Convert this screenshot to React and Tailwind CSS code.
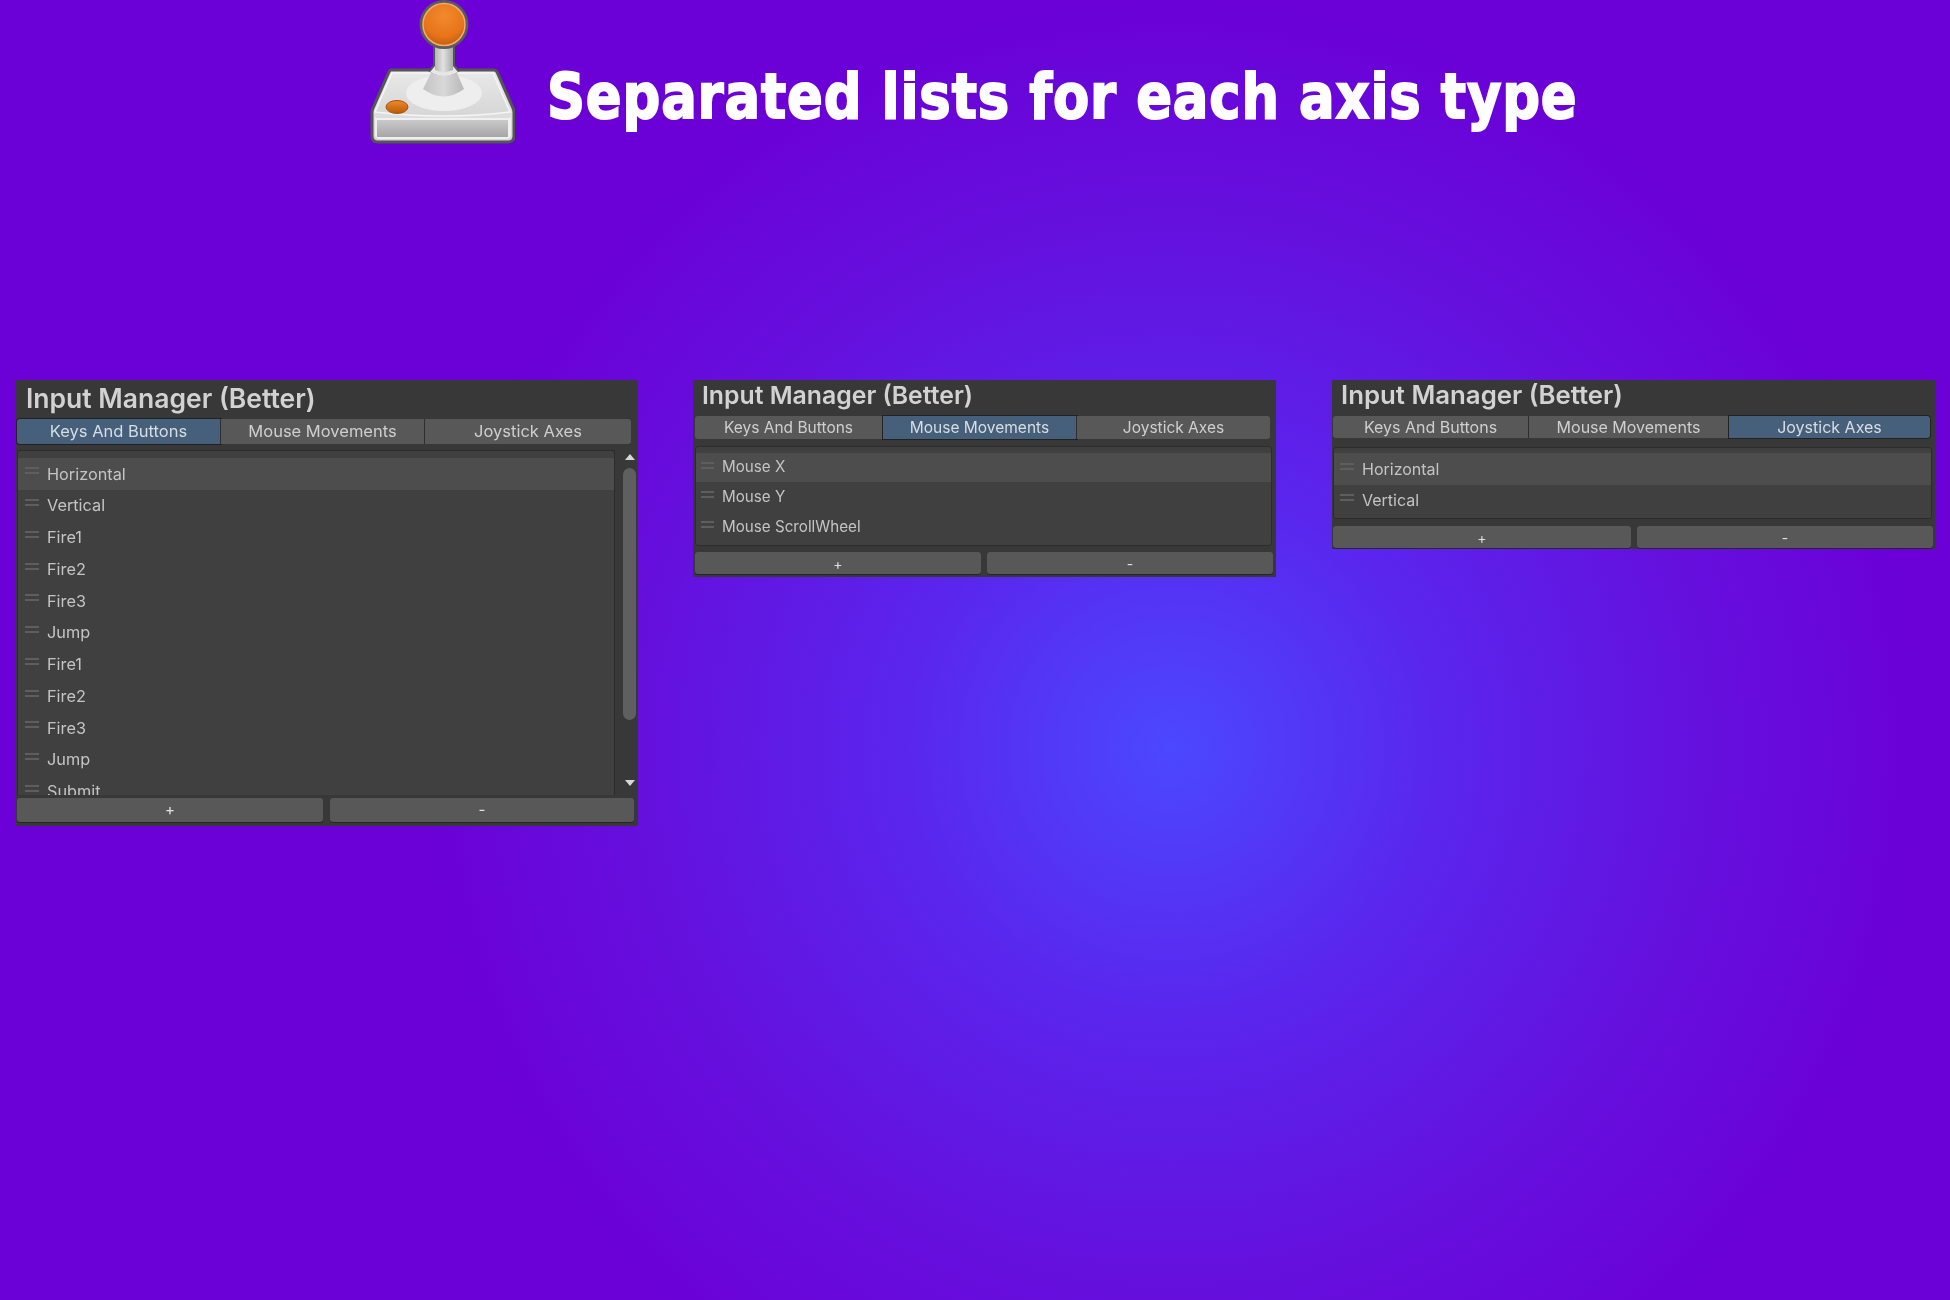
const keyRows = ["Horizontal", "Vertical", "Fire1", "Fire2", "Fire3", "Jump", "Fire1", "Fire2", "Fire3", "Jump", "Submit"];

const Joystick = () => (
  <svg width="145" height="145" viewBox="30 0 145 145" className="shrink-0">
    <defs>
      <linearGradient id="front" x1="0" y1="0" x2="0" y2="1">
        <stop offset="0" stopColor="#c9c9c9" />
        <stop offset="1" stopColor="#a6a6a6" />
      </linearGradient>
      <linearGradient id="top" x1="0" y1="0" x2="0" y2="1">
        <stop offset="0" stopColor="#e8e8e8" />
        <stop offset="1" stopColor="#d6d6d6" />
      </linearGradient>
      <linearGradient id="stem" x1="0" y1="0" x2="1" y2="0">
        <stop offset="0" stopColor="#b4b4b4" />
        <stop offset="0.45" stopColor="#e2e2e2" />
        <stop offset="1" stopColor="#a8a8a8" />
      </linearGradient>
      <linearGradient id="cone" x1="0" y1="0" x2="1" y2="0">
        <stop offset="0" stopColor="#c4c4c4" />
        <stop offset="0.5" stopColor="#d8d8d8" />
        <stop offset="1" stopColor="#b8b8b8" />
      </linearGradient>
      <radialGradient id="ball" cx="0.5" cy="0.3" r="0.75">
        <stop offset="0" stopColor="#f28a2c" />
        <stop offset="0.65" stopColor="#e8741a" />
        <stop offset="1" stopColor="#b85a0c" />
      </radialGradient>
      <linearGradient id="pad" x1="0" y1="0" x2="0" y2="1">
        <stop offset="0" stopColor="#f08a25" />
        <stop offset="1" stopColor="#b85a0c" />
      </linearGradient>
    </defs>
    <path d="M51 70 H154 Q156 70 157 72 L173 108 Q174 110 174 113 V136 Q174 142 168 142 H38 Q32 142 32 136 V113 Q32 110 33 108 L49 72 Q50 70 51 70 Z" fill="url(#top)" stroke="#555" strokeWidth="3" />
    <path d="M52 73 H153 L170 112 Q138 116 103 116 Q68 116 35 112 Z" fill="url(#top)" stroke="#f5f5f5" strokeWidth="1.5" />
    <path d="M35 116 Q35 118 38 118 H168 Q171 118 171 116 V134 Q171 139 166 139 H40 Q35 139 35 134 Z" fill="#f0f0f0" />
    <rect x="37" y="120" width="131" height="17" fill="url(#front)" />
    <ellipse cx="104" cy="93" rx="38" ry="18" fill="#eeeeee" />
    <path d="M92 71 H116 L124 89 Q104 104 83 89 Z" fill="url(#cone)" />
    <path d="M93 40 H115 V65 L120 71 Q104 80 88 71 L93 65 Z" fill="#555" />
    <path d="M90 72 L95 66 H113 L118 72 Q104 80 90 72 Z" fill="#e6e6e6" />
    <path d="M95 40 H113 V70 Q104 74 95 70 Z" fill="url(#stem)" />
    <circle cx="104" cy="24.5" r="24.5" fill="#5c5c5c" />
    <circle cx="104" cy="24.5" r="21" fill="url(#ball)" stroke="#f2ac70" strokeWidth="1.5" />
    <ellipse cx="57" cy="107" rx="11" ry="6.5" fill="url(#pad)" stroke="#a65208" strokeWidth="1" />
  </svg>
);

const Handle = ({ className }) => (
  <div className={`flex flex-col gap-[3px] ${className}`}>
    <div className="h-[2px] bg-[#5e5e5e]" />
    <div className="h-[2px] bg-[#5e5e5e]" />
  </div>
);

const Tab = ({ label, active, className }) => (
  <div
    className={`flex items-center justify-center border-r border-[#2e2e2e] first:rounded-l-[3px] last:rounded-r-[3px] last:border-r-0 ${
      active ? "bg-[#46607c] text-[#d8dde2] shadow-[0_0_0_1px_#222]" : "bg-[#585858] text-[#cfcfcf]"
    } ${className}`}
  >
    {label}
  </div>
);

const Scrollbar = () => (
  <div className="flex w-[13px] flex-col items-center">
    <div className="mt-[4px] h-0 w-0 border-x-[5px] border-b-[6px] border-x-transparent border-b-[#d8d8d8]" />
    <div className="mt-[8px] h-[252px] w-[13px] rounded-full bg-[#5f5f5f]" />
    <div className="mt-[60px] h-0 w-0 border-x-[5px] border-t-[6px] border-x-transparent border-t-[#d8d8d8]" />
  </div>
);

const AddRemove = ({ plus, minus, className }) => (
  <div className={`flex justify-between text-[#e0e0e0] ${className}`}>
    <div className={`flex items-center justify-center rounded-[3px] bg-[#585858] shadow-[0_1px_0_#262626] ${plus}`}>+</div>
    <div className={`flex items-center justify-center rounded-[3px] bg-[#585858] shadow-[0_1px_0_#262626] ${minus}`}>-</div>
  </div>
);

const App = () => {
  return (
    <div className="h-[1300px] w-[1950px] overflow-hidden bg-[radial-gradient(circle_760px_at_1172px_748px,#4b48ff_0%,#5a26ee_35%,#6510dd_70%,#6b00d7_100%)] font-['Inter',sans-serif]">
      {/* Header */}
      <div className="flex h-[380px] items-start gap-[32px] pl-[370px]">
        <Joystick />
        <h1 className="mt-[50px] origin-left scale-x-[0.838] font-['DejaVu_Sans',sans-serif] text-[63px] leading-[94px] font-bold tracking-[1px] whitespace-nowrap text-white [-webkit-text-stroke:2px_white]">
          Separated lists for each axis type
        </h1>
      </div>

      <div className="flex items-start pl-[15px]">
        {/* Keys panel */}
        <div className="flex h-[446px] w-[623px] flex-col bg-[#383838] pl-[2px] blur-[0.4px]">
          <div className="flex h-[39px] items-center pb-[1px] pl-[9px] text-[26.5px] font-semibold text-[#d2d2d2]">Input Manager (Better)</div>
          <div className="flex h-[25px] w-[614px] text-[16.5px]">
            <Tab label="Keys And Buttons" active className="w-[204px]" />
            <Tab label="Mouse Movements" className="w-[204px]" />
            <Tab label="Joystick Axes" className="w-[206px]" />
          </div>
          <div className="mt-[6px] flex h-[345px] gap-[8px]">
            <div className="h-[345px] w-[598px] overflow-hidden rounded-t-[3px] border-x border-t border-[#2c2c2c] bg-[#404040] pt-[7px] text-[16.3px] text-[#c4c4c4]">
              {keyRows.map((name, i) => (
                <div key={i} className={`flex h-[31.75px] items-center ${i === 0 ? "bg-[#4d4d4d]" : ""}`}>
                  <Handle className="mb-[6px] ml-[7px] w-[14px]" />
                  <span className="ml-[8px]">{name}</span>
                </div>
              ))}
            </div>
            <Scrollbar />
          </div>
          <AddRemove className="mt-[3px] h-[24px] w-[617px] text-[15px]" plus="w-[306px]" minus="w-[304px]" />
        </div>

        {/* Mouse panel */}
        <div className="ml-[55px] flex h-[197px] w-[583px] flex-col bg-[#383838] pl-[2px] blur-[0.4px]">
          <div className="flex h-[36px] items-center pb-[4px] pl-[7px] text-[24.8px] font-semibold text-[#d2d2d2]">Input Manager (Better)</div>
          <div className="flex h-[23px] w-[575px] text-[15.5px]">
            <Tab label="Keys And Buttons" className="w-[188px]" />
            <Tab label="Mouse Movements" active className="w-[194px]" />
            <Tab label="Joystick Axes" className="w-[193px]" />
          </div>
          <div className="mt-[7px] h-[100px] w-[577px] overflow-hidden rounded-[3px] border border-[#2c2c2c] bg-[#404040] pt-[6px] text-[15.2px] text-[#c4c4c4]">
            <div className="flex h-[29px] items-center bg-[#4d4d4d]">
              <Handle className="mb-[5px] ml-[5px] w-[13px]" />
              <span className="ml-[8px]">Mouse X</span>
            </div>
            <div className="flex h-[30px] items-center">
              <Handle className="mb-[5px] ml-[5px] w-[13px]" />
              <span className="ml-[8px]">Mouse Y</span>
            </div>
            <div className="flex h-[30px] items-center">
              <Handle className="mb-[5px] ml-[5px] w-[13px]" />
              <span className="ml-[8px]">Mouse ScrollWheel</span>
            </div>
          </div>
          <AddRemove className="mt-[6px] h-[22px] w-[578px] text-[14px]" plus="w-[286px]" minus="w-[286px]" />
        </div>

        {/* Joystick panel */}
        <div className="ml-[56px] flex h-[169px] w-[603px] flex-col bg-[#383838] pl-[1px] blur-[0.4px]">
          <div className="flex h-[36px] items-center pb-[5px] pl-[8px] text-[25.8px] font-semibold text-[#d2d2d2]">Input Manager (Better)</div>
          <div className="flex h-[23px] w-[597px] pb-[1px] text-[16px]">
            <Tab label="Keys And Buttons" className="w-[196px]" />
            <Tab label="Mouse Movements" className="w-[200px]" />
            <Tab label="Joystick Axes" active className="w-[201px]" />
          </div>
          <div className="mt-[8px] h-[72px] w-[599px] overflow-hidden rounded-[3px] border border-[#2c2c2c] bg-[#404040] pt-[5px] text-[16px] text-[#c4c4c4]">
            <div className="flex h-[32px] items-center bg-[#4d4d4d]">
              <Handle className="mb-[6px] ml-[6px] w-[14px]" />
              <span className="ml-[8px]">Horizontal</span>
            </div>
            <div className="flex h-[30px] items-center">
              <Handle className="mb-[6px] ml-[6px] w-[14px]" />
              <span className="ml-[8px]">Vertical</span>
            </div>
          </div>
          <AddRemove className="mt-[7px] h-[22px] w-[600px] text-[14px]" plus="w-[298px]" minus="w-[296px]" />
        </div>
      </div>
    </div>
  );
};

export default App;
